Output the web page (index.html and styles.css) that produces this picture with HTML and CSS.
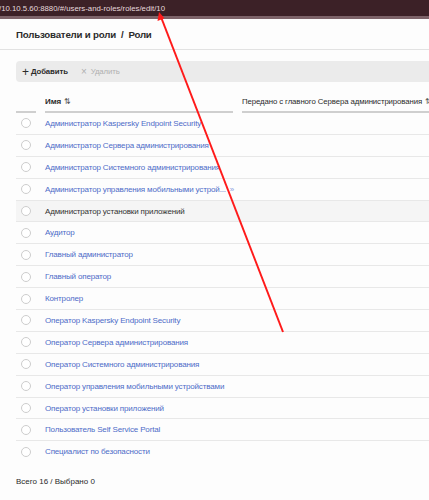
FILE: index.html
```html
<!DOCTYPE html>
<html lang="ru">
<head>
<meta charset="utf-8">
<title>Роли</title>
<link rel="stylesheet" href="styles.css">
</head>
<body>
<div class="urlbar"><span class="url">/10.10.5.60:8880/#/users-and-roles/roles/edit/10</span></div>
<div class="page">
  <div class="breadcrumb">Пользователи и роли &nbsp;/&nbsp; Роли</div>
  <div class="content">
    <div class="toolbar">
      <span class="btn"><span class="plus">+</span>Добавить</span>
      <span class="btn disabled"><span class="times">×</span>Удалить</span>
    </div>
    <div class="thead">
      <div class="th th-check"></div>
      <div class="th th-name">Имя <span class="sort">⇅</span></div>
      <div class="th th-master">Передано с главного Сервера администрирования <span class="sort">⇅</span></div>
    </div>
    <div class="tbody">
      <div class="row"><span class="radio"></span><span class="name">Администратор Kaspersky Endpoint Security</span></div>
      <div class="row"><span class="radio"></span><span class="name">Администратор Сервера администрирования</span></div>
      <div class="row"><span class="radio"></span><span class="name">Администратор Системного администрирования</span></div>
      <div class="row"><span class="radio"></span><span class="name trunc">Администратор управления мобильными устрой...</span><span class="more">»</span></div>
      <div class="row hover"><span class="radio"></span><span class="name">Администратор установки приложений</span></div>
      <div class="row"><span class="radio"></span><span class="name">Аудитор</span></div>
      <div class="row"><span class="radio"></span><span class="name">Главный администратор</span></div>
      <div class="row"><span class="radio"></span><span class="name">Главный оператор</span></div>
      <div class="row"><span class="radio"></span><span class="name">Контролер</span></div>
      <div class="row"><span class="radio"></span><span class="name">Оператор Kaspersky Endpoint Security</span></div>
      <div class="row"><span class="radio"></span><span class="name">Оператор Сервера администрирования</span></div>
      <div class="row"><span class="radio"></span><span class="name">Оператор Системного администрирования</span></div>
      <div class="row"><span class="radio"></span><span class="name">Оператор управления мобильными устройствами</span></div>
      <div class="row"><span class="radio"></span><span class="name">Оператор установки приложений</span></div>
      <div class="row"><span class="radio"></span><span class="name">Пользователь Self Service Portal</span></div>
      <div class="row last"><span class="radio"></span><span class="name">Специалист по безопасности</span></div>
    </div>
    <div class="footer">Всего 16 / Выбрано 0</div>
  </div>
</div>
<svg class="arrow" width="429" height="500" viewBox="0 0 429 500">
  <line x1="283" y1="332" x2="161" y2="17" stroke="#ff1a1a" stroke-width="2"/>
  <path d="M159 12 L157.5 21 L164.5 18.3 Z" fill="#ff1a1a"/>
</svg>
</body>
</html>
```
FILE: styles.css
```css
html, body {
  margin: 0;
  padding: 0;
  overflow: hidden;
  width: 429px;
  height: 500px;
  background: #fdfdfd;
  font-family: "Liberation Sans", Arial, sans-serif;
  position: relative;
}
.urlbar {
  height: 16px;
  background: #3c2127;
  border-bottom: 3px solid #7d6369;
  display: flex;
  align-items: center;
}
.url {
  color: #e6dade;
  font-size: 7.8px;
  margin-left: -1px;
  white-space: nowrap;
}
.page {
  width: 560px;
}
.breadcrumb {
  height: 30px;
  border-bottom: 1px solid #e2e2e2;
  padding-left: 16px;
  display: flex;
  align-items: center;
  font-size: 9.7px;
  font-weight: bold;
  color: #2b2b2b;
  letter-spacing: -0.2px;
}
.content {
  padding: 11px 0 0 16px;
}
.toolbar {
  height: 21px;
  background: #ebebeb;
  border-radius: 4px;
  display: flex;
  align-items: center;
  padding-left: 6px;
  gap: 13px;
  font-size: 7.8px;
  letter-spacing: -0.1px;
}
.btn {
  display: flex;
  align-items: center;
  color: #2b2b2b;
  font-weight: bold;
}
.btn.disabled {
  color: #b0b0b0;
  font-weight: normal;
}
.plus {
  font-size: 12px;
  font-weight: normal;
  margin-right: 2px;
  line-height: 1;
}
.times {
  font-size: 10px;
  margin-right: 4px;
  line-height: 1;
}
.thead {
  display: flex;
  height: 31px;
  align-items: flex-end;
}
.th {
  height: 19px;
  border-bottom: 2px solid #cfcfcf;
  display: flex;
  align-items: center;
  font-size: 8px;
  color: #2b2b2b;
  white-space: nowrap;
  overflow: hidden;
  letter-spacing: -0.1px;
}
.th-check {
  width: 20px;
  margin-right: 9px;
}
.th-name {
  width: 188px;
  margin-right: 9px;
  font-weight: bold;
}
.th-master {
  width: 300px;
  font-size: 7.8px;
}
.sort {
  margin-left: 3px;
  font-weight: normal;
  color: #555;
}
.row {
  height: 21.9px;
  box-sizing: border-box;
  border-bottom: 1px solid #e8e8e8;
  display: flex;
  align-items: center;
  font-size: 8px;
  letter-spacing: -0.15px;
  color: #4d6cc8;
}
.row.last {
  border-bottom-color: transparent;
}
.row.hover {
  background: #f5f5f5;
  color: #333;
}
.radio {
  width: 10px;
  height: 10px;
  box-sizing: border-box;
  border: 1px solid #cdcdcd;
  border-radius: 50%;
  background: #fff;
  margin-left: 5px;
  margin-right: 14px;
}
.name {
  white-space: nowrap;
}
.more {
  margin-left: 4px;
  color: #8aa0e0;
}
.footer {
  margin-top: 14px;
  font-size: 8px;
  color: #2b2b2b;
}
.arrow {
  position: absolute;
  left: 0;
  top: 0;
  pointer-events: none;
}
```
